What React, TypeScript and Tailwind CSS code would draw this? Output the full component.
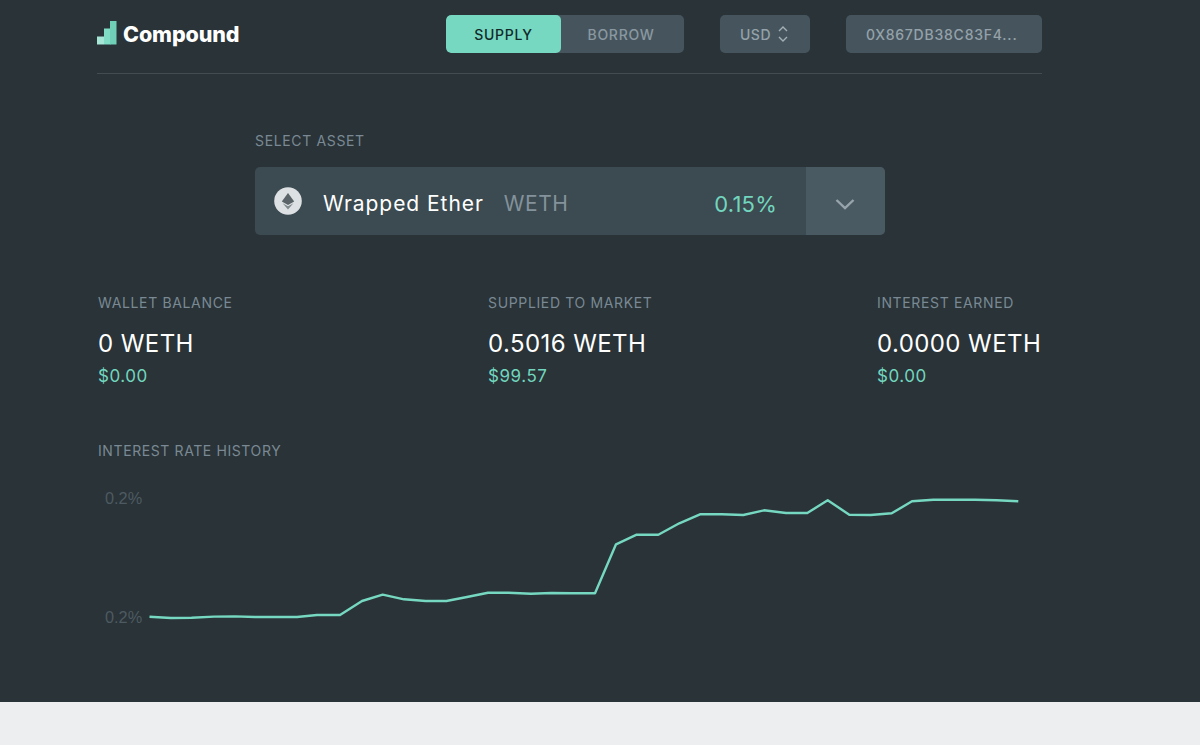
const linePoints =
  "149.5,616.7 171,618 191.6,617.7 214,616.6 234.6,616.4 255,617 276,617 297,617 317,615 340,615 362,601 382.7,594.7 404,599.3 425.7,601 446.4,601 467,597 488,592.7 508.4,592.7 531,593.7 551.4,593 572,593.3 595,593.3 616,544.3 636.7,534.7 658.3,534.7 679.3,523.3 700,514.3 721.7,514.3 743.3,515 764,510.3 786,513 807.3,513 827.7,500.3 849.3,514.7 870.7,515 891.7,513.3 912,501.3 933.3,499.7 955,499.7 975,499.7 996.7,500.3 1018.3,501.3";

const Logo = () => (
  <svg width="20" height="24" viewBox="0 0 20 24" className="mb-[3px] shrink-0">
    <rect x="0" y="15.5" width="7" height="8" fill="#a5e6d6" />
    <rect x="7" y="7.5" width="6.5" height="16" fill="#7fdcc5" />
    <rect x="13" y="0" width="6.5" height="23.5" fill="#6fcfb7" />
  </svg>
);

const EthIcon = () => (
  <svg width="28" height="28" viewBox="0 0 28 28" className="shrink-0">
    <circle cx="14" cy="14" r="13.8" fill="#dde1e3" />
    <path d="M14 6 L7.8 14.6 L14 18 L20.2 14.6 Z" fill="#5a6468" />
    <path d="M8.6 16.2 L14 22.4 L19.4 16.2 L14 19.2 Z" fill="#7f898d" />
  </svg>
);

const Stat = ({ label, value, usd }: { label: string; value: string; usd: string }) => (
  <div className="flex flex-col whitespace-nowrap">
    <div className="h-[18px] text-[14px] leading-[18px] tracking-[0.65px] text-[#7a8993]">{label}</div>
    <div className="mt-[16px] h-[32px] text-[24px] leading-[32px] tracking-[0.42px] text-white">{value}</div>
    <div className="mt-[4px] h-[24px] text-[17px] leading-[24px] tracking-[0.55px] text-[#72d6be]">{usd}</div>
  </div>
);

export default function App() {
  return (
    <div className="flex h-[745px] flex-col overflow-hidden bg-[#eceef0] font-['Inter',sans-serif]">
      <div className="h-[702px] bg-[#293338] pl-[97px]">
        <div className="w-[945px]">
          <header className="flex h-[74px] items-start border-b border-[#434c52] pt-[15px]">
            <div className="flex h-[38px] w-[349px] items-center gap-[6px]">
              <Logo />
              <span className="pt-[2px] text-[21.5px] leading-none font-extrabold tracking-[-0.1px] text-white">Compound</span>
            </div>
            <div className="flex h-[38px] w-[238px] overflow-hidden rounded-[5px] bg-[#46555d] text-[14px] font-medium tracking-[0.7px]">
              <div className="flex w-[115px] items-center justify-center rounded-[5px] bg-[#76d8c0] text-[#12292a]">SUPPLY</div>
              <div className="flex flex-1 items-center justify-center pr-[3px] text-[#8a98a1]">BORROW</div>
            </div>
            <div className="ml-[36px] flex h-[38px] w-[90px] items-center gap-[6px] rounded-[5px] bg-[#46555d] pl-[20px] text-[14px] font-medium tracking-[0.5px] text-[#95a2aa]">
              USD
              <svg width="12" height="18" viewBox="0 0 12 18" fill="none" stroke="#a3aeb5" strokeWidth="1.4">
                <path d="M2 6 L6 2 L10 6" />
                <path d="M2 12 L6 16 L10 12" />
              </svg>
            </div>
            <div className="ml-[36px] flex h-[38px] flex-1 items-center rounded-[5px] bg-[#46555d] pl-[20px] text-[14px] font-medium tracking-[0.78px] text-[#95a2aa]">
              0X867DB38C83F4...
            </div>
          </header>

          <section className="ml-[158px] w-[630px] pt-[58px]">
            <div className="h-[18px] text-[14px] leading-[18px] tracking-[0.65px] text-[#7a8993]">SELECT ASSET</div>
            <div className="mt-[17px] flex h-[68px] overflow-hidden rounded-[5px] bg-[#3c4a51]">
              <div className="flex flex-1 items-center pl-[19px]">
                <EthIcon />
                <span className="mt-[6px] ml-[21px] text-[21px] tracking-[0.95px] text-white">Wrapped Ether</span>
                <span className="mt-[6px] ml-[20px] text-[21px] tracking-[0.5px] text-[#84929b]">WETH</span>
                <span className="mt-[6px] mr-[29px] ml-auto text-[22px] tracking-[0.2px] text-[#72d6be]">0.15%</span>
              </div>
              <div className="flex w-[79px] items-center justify-center bg-[#4a5a62] pt-[6px] pr-[2px]">
                <svg width="20" height="12" viewBox="0 0 20 12" fill="none" stroke="#98a4ab" strokeWidth="2.4">
                  <path d="M1.5 2 L10 10 L18.5 2" />
                </svg>
              </div>
            </div>
          </section>

          <section className="grid grid-cols-[390px_389px_auto] pt-[59px] pl-px">
            <Stat label="WALLET BALANCE" value="0 WETH" usd="$0.00" />
            <Stat label="SUPPLIED TO MARKET" value="0.5016 WETH" usd="$99.57" />
            <Stat label="INTEREST EARNED" value="0.0000 WETH" usd="$0.00" />
          </section>

          <div className="mt-[54px] h-[18px] pl-px text-[14px] leading-[18px] tracking-[0.6px] text-[#7a8993]">INTEREST RATE HISTORY</div>
        </div>

        <svg width="945" height="170" viewBox="97 480 945 170" className="mt-[20px] block" fill="none">
          <text x="105" y="504" fontFamily="Liberation Sans" fontSize="16.3" fill="#4e5a61">0.2%</text>
          <text x="105" y="623" fontFamily="Liberation Sans" fontSize="16.3" fill="#4e5a61">0.2%</text>
          <polyline points={linePoints} stroke="#76d8c0" strokeWidth="2.4" strokeLinejoin="round" />
        </svg>
      </div>
    </div>
  );
}
